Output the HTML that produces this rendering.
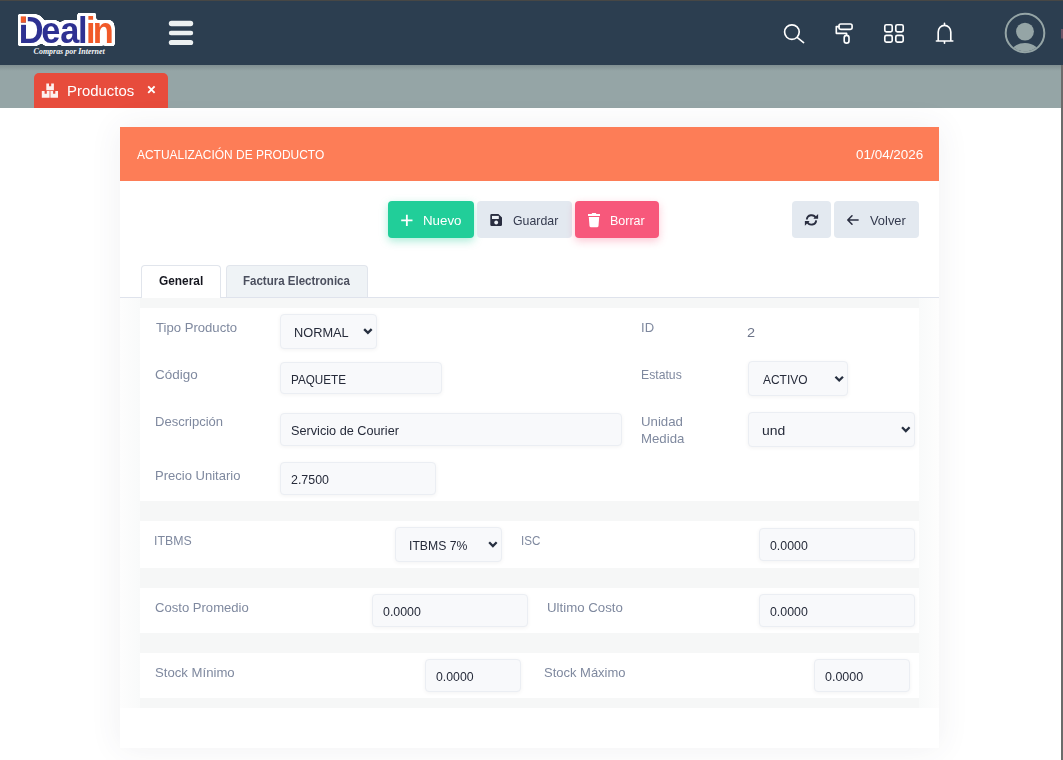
<!DOCTYPE html>
<html lang="es">
<head>
<meta charset="utf-8">
<title>Dealin - Productos</title>
<style>
*{box-sizing:border-box}
html,body{margin:0;padding:0}
body{width:1063px;height:760px;overflow:hidden;position:relative;background:#fff;font-family:"Liberation Sans",sans-serif;font-size:13px;color:#575962}
.abs,.tx,svg.ic{position:absolute}
.tx{display:block;white-space:nowrap;transform-origin:0 50%}
svg.ic{left:0;top:0;width:1063px;height:760px;overflow:visible;pointer-events:none}
.topline{left:0;top:0;width:1063px;height:1px;background:#474745}
.scrollstrip{left:1061px;top:65px;width:2px;height:695px;background:#6b6b6b}
.navbar-bg{left:0;top:0;width:1063px;height:65px;background:#2c3e50;box-shadow:0 1px 3px rgba(0,0,0,.22)}
.tabbar-bg{left:0;top:65px;width:1061px;height:43px;background:#95a5a6}
.ptab-bg{left:34px;top:73px;width:134px;height:35px;background:#e74c3c;border-radius:5px 5px 0 0}
.card-bg{left:120px;top:127px;width:819px;height:621px;background:#fff;box-shadow:0 0 30px 0 rgba(70,70,90,.08)}
.chead-bg{left:120px;top:127px;width:819px;height:54px;background:#fd7d57}
.w{color:#fff}
.btn-bg{top:201px;height:37px;border-radius:4px}
.b-new{left:388px;width:86px;background:#21ce99;box-shadow:0 3px 9px rgba(33,206,153,.38)}
.b-save{left:477.3px;width:94.6px;background:#e3e9f0}
.b-del{left:575px;width:84px;background:#f7587b;box-shadow:0 3px 9px rgba(247,88,123,.33)}
.b-ref{left:792px;width:39px;background:#e3e9f0}
.b-back{left:834px;width:85px;background:#e3e9f0}
.bt{color:#343a4e}
.tabline{left:120px;top:297px;width:819px;height:1px;background:#dfe3ec}
.tab-bg{top:265px;height:33px;border:1px solid #e1e5ec;border-bottom:none;border-radius:4px 4px 0 0}
.tab-on{left:141px;width:80px;background:#fff}
.tab-off{left:225.5px;width:142px;background:#eff3f6;height:32px}
.tt{font-weight:bold}
.tt.on{color:#15161f}
.tt.off{color:#4b4f5e}
.pane-bg{left:120px;top:298px;width:819px;height:410px;background:linear-gradient(90deg,#fdfdfd,#f9fafa 20px,#f9fafa 799px,#fdfdfd)}
.pane-in{left:140px;top:298px;width:779px;height:410px;background:#f6f7f7}
.sec-bg{left:140px;width:779px;background:#fff}
.lbl{color:#7f899f}
.iv{color:#262b3a}
.val{color:#6b7388}
.inp,.sel{border:1px solid #ebeef3;border-radius:4px;background:#f8f9fb;box-shadow:0 1px 4px rgba(0,0,0,.05)}
.navshadow{left:0;top:65px;width:1061px;height:6px;background:linear-gradient(rgba(20,30,40,.16),rgba(20,30,40,0))}
</style>
</head>
<body>
<div class="navbar">
  <div class="abs navbar-bg"></div>
  <div class="abs topline"></div>
  <svg class="ic logo" viewBox="0 0 1063 760">
  <defs>
    <filter id="logo-outline" filterUnits="userSpaceOnUse" x="5" y="2" width="130" height="56" color-interpolation-filters="sRGB">
      <feMorphology in="SourceAlpha" operator="dilate" radius="3.1" result="fat"/>
      <feGaussianBlur in="fat" stdDeviation="0.9" result="soft"/>
      <feComponentTransfer in="soft" result="edge"><feFuncA type="linear" slope="6" intercept="-2.2"/></feComponentTransfer>
      <feFlood flood-color="#fff" result="white"/>
      <feComposite in="white" in2="edge" operator="in" result="outline"/>
      <feMerge><feMergeNode in="outline"/><feMergeNode in="SourceGraphic"/></feMerge>
    </filter>
  </defs>
  <rect x="25" y="19" width="12" height="21" fill="#fff"/>
  <rect x="98" y="28" width="11" height="16" fill="#fff"/>
  <g transform="scale(0.95,1)" filter="url(#logo-outline)">
    <text font-family="'Liberation Sans',sans-serif" font-weight="bold" font-size="36.2" x="19.74 43.44 63.47 82.05 90.47 97.74" y="42.7" fill="#2e3192">Deal<tspan fill="#f15a29">in</tspan></text>
  </g>
  <rect x="25.9" y="15" width="1.9" height="9.8" fill="#fff"/>
  <rect x="19.5" y="22.6" width="8.3" height="2.2" fill="#fff"/>
  <rect x="20.8" y="16.4" width="5.1" height="6.2" fill="#f15a29"/>
  <text x="33.6" y="54.2" font-family="'Liberation Serif',serif" font-style="italic" font-weight="bold" font-size="7.8" fill="#f4f6f8" textLength="71.2" lengthAdjust="spacingAndGlyphs">Compras por Internet</text>
</svg>
  <svg class="ic navicons" viewBox="0 0 1063 760" fill="none" stroke="#fff" stroke-width="1.65" stroke-linecap="round" stroke-linejoin="round">
  <g class="hamburger" fill="#ecf0f1" stroke="none">
    <rect x="168.8" y="20.8" width="24.4" height="5.4" rx="2.7"/>
    <rect x="168.8" y="30.8" width="24.4" height="4.4" rx="2.2"/>
    <rect x="168.8" y="39.9" width="24.4" height="5.2" rx="2.6"/>
  </g>
  <g class="i-search"><circle cx="791.9" cy="32.1" r="7.3"/><path d="M797.4 37.7L803.6 42.6"/></g>
  <g class="i-roller"><rect x="839" y="24" width="13.1" height="5.3" rx="1.7"/><path d="M839 26.6H836.3V33.3H846.6V35"/><rect x="844.2" y="35.4" width="4.8" height="7.7" rx="2.4"/></g>
  <g class="i-grid"><rect x="884.8" y="24.7" width="7.4" height="7.1" rx="1.6"/><rect x="895.8" y="24.7" width="7.4" height="7.1" rx="1.6"/><rect x="884.8" y="35.3" width="7.4" height="6.8" rx="1.6"/><rect x="895.8" y="35.3" width="7.4" height="6.8" rx="1.6"/></g>
  <g class="i-bell"><path d="M936.4 41H952.8M938.2 41V32A6.3 6.7 0 0 1 950.8 32V41M944.5 23.4V25.2M944.5 41.5V43.2"/></g>
  <g class="avatar" stroke="#95a5a6" stroke-width="2">
    <circle cx="1025" cy="33" r="19.3"/>
    <circle cx="1025" cy="31.6" r="8.9" fill="#95a5a6" stroke="none"/>
    <clipPath id="avc"><circle cx="1025" cy="33" r="18.5"/></clipPath>
    <ellipse cx="1025" cy="55" rx="15" ry="12.1" fill="#95a5a6" stroke="none" clip-path="url(#avc)"/>
  </g>
  <rect x="1061" y="29" width="2" height="9.5" fill="#6e5566" stroke="none"/>
</svg>
</div>
<div class="tabbar">
  <div class="abs tabbar-bg"></div>
  <div class="abs navshadow"></div>
  <div class="ptab">
    <div class="abs ptab-bg"></div>
    <svg class="ic tabicon" viewBox="0 0 1063 760" fill="#fdf0ef">
  <path d="M46.3 83.6H49V86.3H51.2V83.6H53.9V90.2H46.3Z"/>
  <path d="M41.8 91.1H44.6V93.8H46.8V91.1H49.6V97.8H41.8Z"/>
  <path d="M50.4 91.1H53.1V93.8H55.3V91.1H58V97.8H50.4Z"/>
  <path d="M148.2 86.4L154.6 92.8M154.6 86.4L148.2 92.8" stroke="#fff" stroke-width="1.9" fill="none"/>
</svg>
    <span class="tx w" id="t0" style="left:67.03px;top:81.74px;font-size:14.6px;line-height:19px;transform:scaleX(1.0228)">Productos</span>
  </div>
</div>
<div class="abs scrollstrip"></div>
<div class="card">
  <div class="abs card-bg"></div>
  <div class="chead">
    <div class="abs chead-bg"></div>
    <span class="tx w" id="t1" style="left:136.50px;top:146.30px;font-size:13px;line-height:17px;transform:scaleX(0.9202)">ACTUALIZACIÓN DE PRODUCTO</span>
    <span class="tx w" id="t2" style="left:855.98px;top:146.30px;font-size:13px;line-height:17px;transform:scaleX(1.0338)">01/04/2026</span>
  </div>
  <div class="toolbar">
    <div class="abs btn-bg b-new"></div><span class="tx w" id="t3" style="left:422.96px;top:211.60px;font-size:13px;line-height:17px;transform:scaleX(1.0240)">Nuevo</span>
    <div class="abs btn-bg b-save"></div><span class="tx bt" id="t4" style="left:512.92px;top:211.60px;font-size:13px;line-height:17px;transform:scaleX(0.9486)">Guardar</span>
    <div class="abs btn-bg b-del"></div><span class="tx w" id="t5" style="left:610.22px;top:211.60px;font-size:13px;line-height:17px;transform:scaleX(0.9618)">Borrar</span>
    <div class="abs btn-bg b-ref"></div>
    <div class="abs btn-bg b-back"></div><span class="tx bt" id="t6" style="left:869.60px;top:211.60px;font-size:13px;line-height:17px;transform:scaleX(0.9898)">Volver</span>
    <svg class="ic btnicons" viewBox="0 0 1063 760" fill="none" stroke-linecap="round" stroke-linejoin="round">
  <path class="i-plus" d="M401.2 220.3H412.5M406.85 214.7V225.9" stroke="#fff" stroke-width="1.8" stroke-linecap="butt"/>
  <g class="i-save">
    <path d="M491.6 214H498.4L502 217.4V224.8A1.3 1.3 0 0 1 500.7 226H491.6A1.3 1.3 0 0 1 490.3 224.8V215.3A1.3 1.3 0 0 1 491.6 214Z" fill="#2a2e40"/>
    <rect x="492" y="215.9" width="6.8" height="3.1" fill="#eef2f7"/>
    <circle cx="496.2" cy="222.5" r="1.9" fill="#eef2f7"/>
  </g>
  <g class="i-trash" fill="#fff">
    <path d="M588 214H591.6L592.2 213H595.8L596.4 214H600V216H588Z"/>
    <path d="M588.8 217H599.2L598.5 226.1A1.2 1.2 0 0 1 597.3 227.2H590.7A1.2 1.2 0 0 1 589.5 226.1Z"/>
  </g>
  <g class="i-sync" stroke="#2a2e40" stroke-width="1.9" stroke-linecap="butt">
    <path d="M806.82 219.49A4.7 4.7 0 0 1 815.76 217.91"/>
    <path d="M816.18 220.31A4.7 4.7 0 0 1 807.24 221.89"/>
    <path d="M818.1 214V218.7H813.4Z" fill="#2a2e40" stroke="none"/>
    <path d="M804.9 225.8V221.1H809.6Z" fill="#2a2e40" stroke="none"/>
  </g>
  <path class="i-arrow" d="M858.1 220H848M852 215.7L847.8 220L852 224.3" stroke="#2a2e40" stroke-width="1.55"/>
</svg>
  </div>
  <div class="tabs">
    <div class="abs tab-bg tab-off"></div>
    <div class="abs tabline"></div>
    <div class="abs tab-bg tab-on"></div>
    <span class="tx tt on" id="t7" style="left:159.36px;top:273.14px;font-size:12px;line-height:16px;transform:scaleX(0.9884)">General</span>
    <span class="tx tt off" id="t8" style="left:242.93px;top:273.14px;font-size:12px;line-height:16px;transform:scaleX(0.9598)">Factura Electronica</span>
  </div>
  <div class="pane">
    <div class="abs pane-bg"></div>
    <div class="abs pane-in"></div>
    <div class="sec">
      <div class="abs sec-bg" style="top:308px;height:193px"></div>
      <span class="tx lbl" id="t9" style="left:155.50px;top:319.20px;font-size:13px;line-height:17px;transform:scaleX(1.0085)">Tipo Producto</span>
      <div class="abs sel" style="left:280px;top:314px;width:97px;height:34.5px"></div><span class="tx iv" id="t10" style="left:294.40px;top:324.20px;font-size:13px;line-height:17px;transform:scaleX(0.9838)">NORMAL</span>
      <span class="tx lbl" id="t11" style="left:155.07px;top:365.80px;font-size:13px;line-height:17px;transform:scaleX(1.0359)">Código</span>
      <div class="abs inp" style="left:280px;top:362.2px;width:162px;height:32.3px"></div><span class="tx iv" id="t12" style="left:290.69px;top:371.20px;font-size:13px;line-height:17px;transform:scaleX(0.8994)">PAQUETE</span>
      <span class="tx lbl" id="t13" style="left:154.68px;top:413.20px;font-size:13px;line-height:17px;transform:scaleX(1.0020)">Descripción</span>
      <div class="abs inp" style="left:280px;top:413px;width:342px;height:33px"></div><span class="tx iv" id="t14" style="left:291.20px;top:422.00px;font-size:13px;line-height:17px;transform:scaleX(0.9766)">Servicio de Courier</span>
      <span class="tx lbl" id="t15" style="left:154.68px;top:467.00px;font-size:13px;line-height:17px;transform:scaleX(1.0022)">Precio Unitario</span>
      <div class="abs inp" style="left:280px;top:462px;width:156px;height:32.5px"></div><span class="tx iv" id="t16" style="left:291.02px;top:471.20px;font-size:13px;line-height:17px;transform:scaleX(0.9555)">2.7500</span>
      <span class="tx lbl" id="t17" style="left:640.98px;top:319.00px;font-size:13px;line-height:17px;transform:scaleX(1.0057)">ID</span>
      <span class="tx val" id="t18" style="left:747.32px;top:324.20px;font-size:13px;line-height:17px;transform:scaleX(1.1159)">2</span>
      <span class="tx lbl" id="t19" style="left:641.05px;top:365.60px;font-size:13px;line-height:17px;transform:scaleX(0.9396)">Estatus</span>
      <div class="abs sel" style="left:748px;top:361px;width:100px;height:34.5px"></div><span class="tx iv" id="t20" style="left:763.20px;top:371.20px;font-size:13px;line-height:17px;transform:scaleX(0.9199)">ACTIVO</span>
      <span class="tx lbl" id="t21" style="left:641.17px;top:412.80px;font-size:13px;line-height:17px;transform:scaleX(1.0188)">Unidad</span>
      <span class="tx lbl" id="t22" style="left:640.97px;top:429.80px;font-size:13px;line-height:17px;transform:scaleX(1.0167)">Medida</span>
      <div class="abs sel" style="left:748px;top:412px;width:167px;height:34.5px"></div><span class="tx iv" id="t23" style="left:762.33px;top:421.80px;font-size:13px;line-height:17px;transform:scaleX(1.0721)">und</span>
    </div>
    <div class="sec">
      <div class="abs sec-bg" style="top:521px;height:47px"></div>
      <span class="tx lbl" id="t24" style="left:154.44px;top:532.00px;font-size:13px;line-height:17px;transform:scaleX(0.9486)">ITBMS</span>
      <div class="abs sel" style="left:395px;top:527px;width:107px;height:34.5px"></div><span class="tx iv" id="t25" style="left:409.45px;top:536.90px;font-size:13px;line-height:17px;transform:scaleX(0.9387)">ITBMS 7%</span>
      <span class="tx lbl" id="t26" style="left:520.59px;top:532.00px;font-size:13px;line-height:17px;transform:scaleX(0.8958)">ISC</span>
      <div class="abs inp" style="left:759px;top:528px;width:156px;height:32.5px"></div><span class="tx iv" id="t27" style="left:769.61px;top:536.90px;font-size:13px;line-height:17px;transform:scaleX(0.9505)">0.0000</span>
    </div>
    <div class="sec">
      <div class="abs sec-bg" style="top:588px;height:44.5px"></div>
      <span class="tx lbl" id="t28" style="left:154.79px;top:599.30px;font-size:13px;line-height:17px;transform:scaleX(1.0057)">Costo Promedio</span>
      <div class="abs inp" style="left:372px;top:594px;width:156px;height:32.5px"></div><span class="tx iv" id="t29" style="left:383.01px;top:603.00px;font-size:13px;line-height:17px;transform:scaleX(0.9531)">0.0000</span>
      <span class="tx lbl" id="t30" style="left:546.57px;top:599.30px;font-size:13px;line-height:17px;transform:scaleX(1.0196)">Ultimo Costo</span>
      <div class="abs inp" style="left:759px;top:594px;width:156px;height:32.5px"></div><span class="tx iv" id="t31" style="left:769.61px;top:603.00px;font-size:13px;line-height:17px;transform:scaleX(0.9505)">0.0000</span>
    </div>
    <div class="sec">
      <div class="abs sec-bg" style="top:653px;height:44.5px"></div>
      <span class="tx lbl" id="t32" style="left:154.99px;top:664.40px;font-size:13px;line-height:17px;transform:scaleX(1.0114)">Stock Mínimo</span>
      <div class="abs inp" style="left:425px;top:659.3px;width:96px;height:32.5px"></div><span class="tx iv" id="t33" style="left:435.72px;top:668.30px;font-size:13px;line-height:17px;transform:scaleX(0.9454)">0.0000</span>
      <span class="tx lbl" id="t34" style="left:544.39px;top:664.40px;font-size:13px;line-height:17px;transform:scaleX(0.9988)">Stock Máximo</span>
      <div class="abs inp" style="left:814px;top:659.3px;width:96px;height:32.5px"></div><span class="tx iv" id="t35" style="left:824.51px;top:668.30px;font-size:13px;line-height:17px;transform:scaleX(0.9608)">0.0000</span>
    </div>
    <svg class="ic chevrons" viewBox="0 0 1063 760" fill="none" stroke="#273040" stroke-width="2.3"><path d="M364.15 329.10L367.90 332.85L371.65 329.10"/><path d="M835.45 376.70L839.20 380.45L842.95 376.70"/><path d="M902.05 427.30L905.80 431.05L909.55 427.30"/><path d="M489.15 542.30L492.90 546.05L496.65 542.30"/></svg>
  </div>
</div>
</body>
</html>
